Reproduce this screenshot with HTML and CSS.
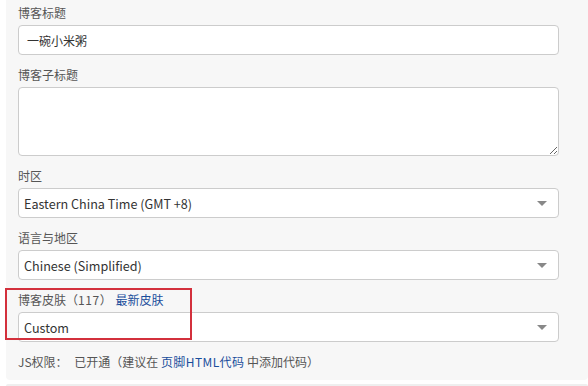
FILE: index.html
```html
<!DOCTYPE html>
<html lang="zh-CN">
<head>
<meta charset="utf-8">
<title>博客设置</title>
<link rel="stylesheet" href="styles.css">
</head>
<body>
<div class="panel">
  <div class="field">
    <label class="label">博客标题</label>
    <input class="input" type="text" value="一碗小米粥">
  </div>
  <div class="field">
    <label class="label">博客子标题</label>
    <textarea class="textarea"></textarea>
  </div>
  <div class="field">
    <label class="label">时区</label>
    <div class="select-wrap">
      <select class="select"><option>Eastern China Time (GMT +8)</option></select>
    </div>
  </div>
  <div class="field">
    <label class="label">语言与地区</label>
    <div class="select-wrap">
      <select class="select"><option>Chinese (Simplified)</option></select>
    </div>
  </div>
  <div class="field skin-field">
    <label class="label">博客皮肤（<span class="num">117</span>） <a class="link skin-link" href="#">最新皮肤</a></label>
    <div class="select-wrap">
      <select class="select"><option>Custom</option></select>
    </div>
    <div class="highlight"></div>
  </div>
  <div class="js-line"><span class="js-key">JS权限：</span> 已开通（建议在 <a class="link wide" href="#">页脚HTML代码</a> 中添加代码）</div>
</div>
<div class="panel next-panel"></div>
</body>
</html>
```
FILE: styles.css
```css
html, body {
  margin: 0;
  padding: 0;
  background: #ffffff;
  overflow: hidden;
}

body {
  font-family: "Noto Sans CJK SC", "Noto Sans", sans-serif;
  font-size: 12px;
  color: #555555;
}

.panel {
  margin-left: 6px;
  background: #f7f7f7;
  padding: 4px 29px 9px 12px;
  border-radius: 0 0 4px 4px;
  position: relative;
}

.next-panel {
  margin-top: 4px;
  height: 2px;
  padding: 0;
  border-radius: 4px 4px 0 0;
  background: #efefef;
}

.field {
  display: flex;
  flex-direction: column;
  margin-bottom: 11px;
}

.label {
  display: block;
  height: 18px;
  line-height: 18px;
  margin-bottom: 3px;
  color: #555555;
  font-size: 12px;
}

.num {
  letter-spacing: 0.6px;
}

.link {
  color: #1a4e9c;
  text-decoration: none;
}

.skin-link {
  margin-left: 1px;
}

.wide {
  letter-spacing: 0.4px;
}

.input,
.textarea,
.select {
  box-sizing: border-box;
  width: 100%;
  margin: 0;
  border: 1px solid #cccccc;
  border-radius: 4px;
  background: #ffffff;
  font-family: "Noto Sans CJK SC", "Noto Sans", sans-serif;
  font-size: 13px;
  color: #333333;
  outline: none;
}

.input {
  height: 30px;
  padding: 0 8px;
  font-size: 12px;
}

.textarea {
  height: 69px;
  padding: 4px 6px;
  display: block;
}

.select-wrap {
  position: relative;
}

.select {
  -webkit-appearance: none;
  appearance: none;
  height: 30px;
  padding: 0 24px 0 5px;
  font-size: 12.6px;
  display: block;
}

.select-wrap::after {
  content: "";
  position: absolute;
  right: 12px;
  top: 13px;
  width: 0;
  height: 0;
  border-left: 5px solid transparent;
  border-right: 5px solid transparent;
  border-top: 5px solid #888888;
  pointer-events: none;
}

.skin-field {
  position: relative;
}

.highlight {
  position: absolute;
  left: -13px;
  top: -3px;
  width: 183px;
  height: 48px;
  border: 2px solid #d3303c;
  pointer-events: none;
}

.js-line {
  height: 18px;
  line-height: 18px;
  color: #555555;
  font-size: 12px;
}

.js-key {
  margin-right: 4px;
}
```
